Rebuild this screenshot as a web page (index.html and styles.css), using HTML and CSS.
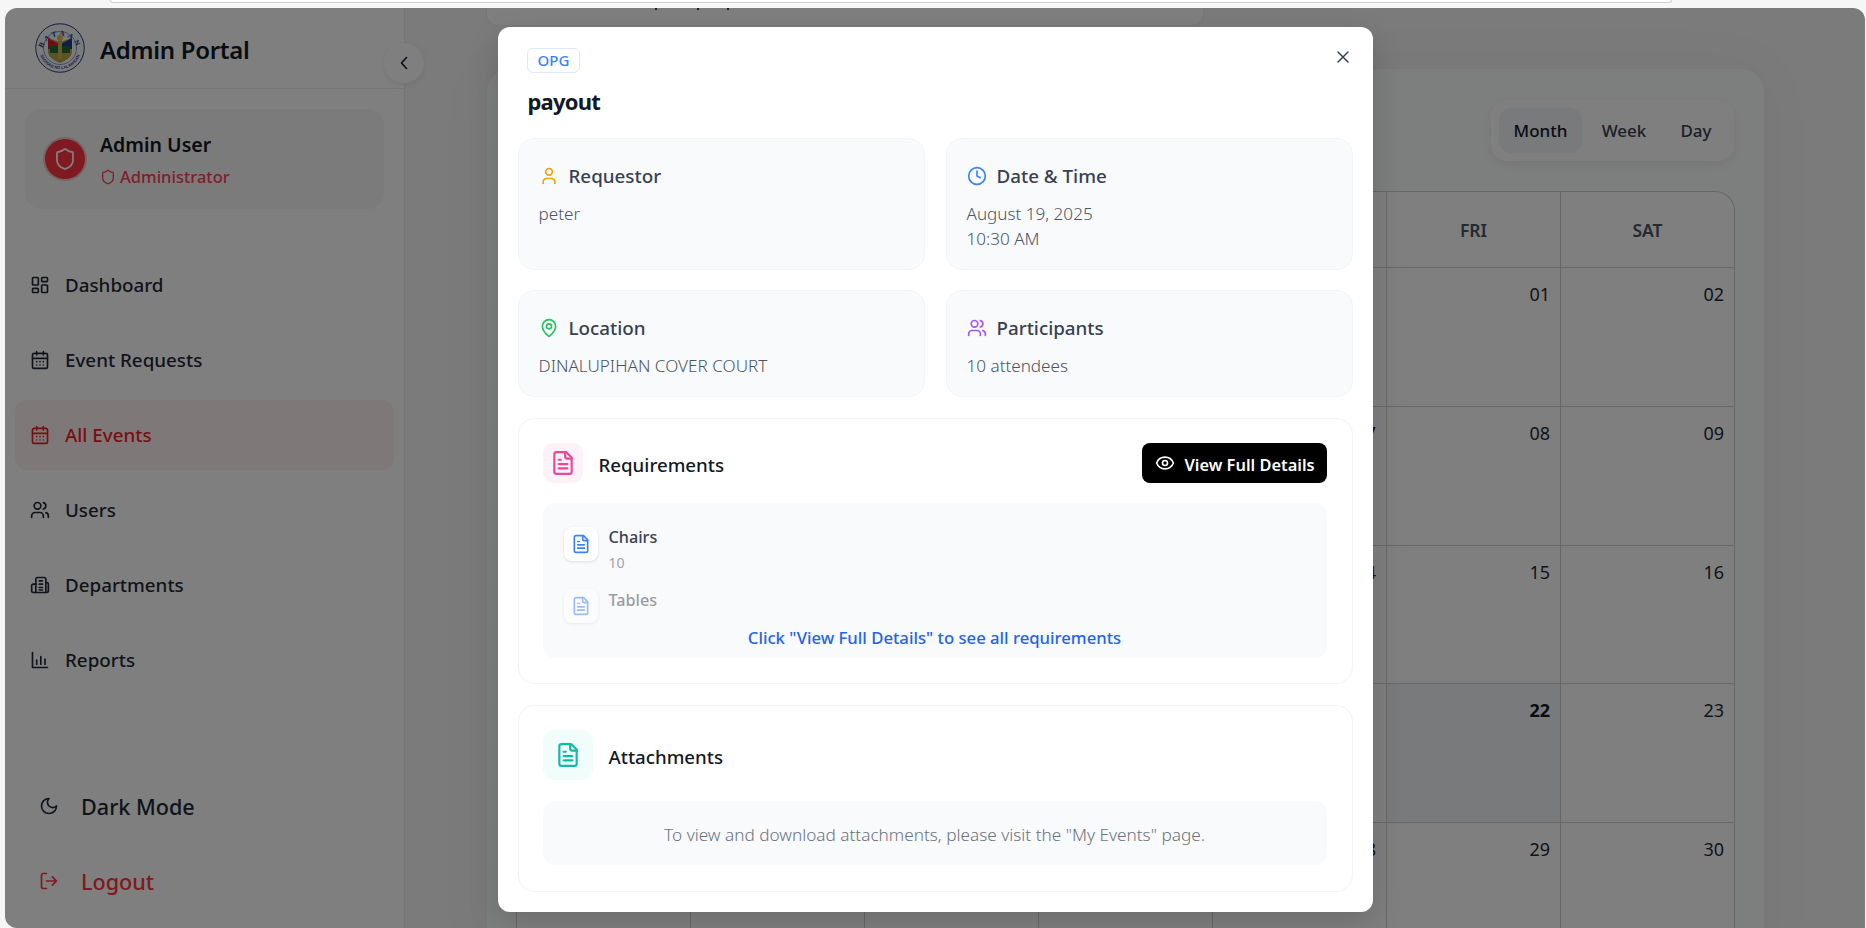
FILE: index.html
```html
<!DOCTYPE html>
<html lang="en">
<head>
<meta charset="utf-8">
<title>Admin Portal</title>
<link rel="stylesheet" href="styles.css">
</head>
<body>
<svg class="defs" width="0" height="0" aria-hidden="true">
  <symbol id="i-shield" viewBox="0 0 24 24"><path d="M20 13c0 5-3.5 7.5-7.66 8.95a1 1 0 0 1-.67-.01C7.5 20.5 4 18 4 13V6a1 1 0 0 1 1-1c2 0 4.5-1.2 6.24-2.72a1.17 1.17 0 0 1 1.52 0C14.51 3.81 17 5 19 5a1 1 0 0 1 1 1z"/></symbol>
  <symbol id="i-dash" viewBox="0 0 24 24"><rect x="3" y="3" width="7" height="9" rx="1"/><rect x="14" y="3" width="7" height="5" rx="1"/><rect x="14" y="12" width="7" height="9" rx="1"/><rect x="3" y="16" width="7" height="5" rx="1"/></symbol>
  <symbol id="i-cal" viewBox="0 0 24 24"><path d="M8 2v4M16 2v4"/><rect x="3" y="4" width="18" height="18" rx="2"/><path d="M3 10h18M8 14h.01M12 14h.01M16 14h.01M8 18h.01M12 18h.01M16 18h.01"/></symbol>
  <symbol id="i-users" viewBox="0 0 24 24"><path d="M16 21v-2a4 4 0 0 0-4-4H6a4 4 0 0 0-4 4v2"/><circle cx="9" cy="7" r="4"/><path d="M22 21v-2a4 4 0 0 0-3-3.87M16 3.13a4 4 0 0 1 0 7.75"/></symbol>
  <symbol id="i-building" viewBox="0 0 24 24"><path d="M7 21V5a2 2 0 0 1 2-2h8a2 2 0 0 1 2 2v16"/><path d="M7 11H4a2 2 0 0 0-2 2v6a2 2 0 0 0 2 2h16a2 2 0 0 0 2-2v-8a2 2 0 0 0-2-2h-1"/><path d="M11 7h4M11 11h4M11 15h4M11 18h4"/></symbol>
  <symbol id="i-chart" viewBox="0 0 24 24"><path d="M3 3v18h18M8 17v-5M13 17V8M18 17v-6"/></symbol>
  <symbol id="i-moon" viewBox="0 0 24 24"><path d="M12 3a6 6 0 0 0 9 9 9 9 0 1 1-9-9Z"/></symbol>
  <symbol id="i-logout" viewBox="0 0 24 24"><path d="M9 21H5a2 2 0 0 1-2-2V5a2 2 0 0 1 2-2h4M16 17l5-5-5-5M21 12H9"/></symbol>
  <symbol id="i-user" viewBox="0 0 24 24"><path d="M19 21v-2a4 4 0 0 0-4-4H9a4 4 0 0 0-4 4v2"/><circle cx="12" cy="7" r="4"/></symbol>
  <symbol id="i-clock" viewBox="0 0 24 24"><circle cx="12" cy="12" r="10"/><path d="M12 6v6l4 2"/></symbol>
  <symbol id="i-pin" viewBox="0 0 24 24"><path d="M20 10c0 5-5.5 10.2-7.4 11.8a1 1 0 0 1-1.2 0C9.5 20.2 4 15 4 10a8 8 0 0 1 16 0"/><circle cx="12" cy="10" r="3"/></symbol>
  <symbol id="i-file" viewBox="0 0 24 24"><path d="M15 2H6a2 2 0 0 0-2 2v16a2 2 0 0 0 2 2h12a2 2 0 0 0 2-2V7Z"/><path d="M14 2v4a2 2 0 0 0 2 2h4M10 9H8M16 13H8M16 17H8"/></symbol>
  <symbol id="i-eye" viewBox="0 0 24 24"><path d="M2.06 12.35a1 1 0 0 1 0-.7 10.75 10.75 0 0 1 19.88 0 1 1 0 0 1 0 .7 10.75 10.75 0 0 1-19.88 0"/><circle cx="12" cy="12" r="3"/></symbol>
</svg>

<div class="browser-strip"><div class="address-pill"></div></div>

<div class="app">
  <aside class="sidebar">
    <header class="brand">
      <svg class="logo" viewBox="0 0 100 100" role="img" aria-label="Bataan seal">
        <defs>
          <path id="arc-top" d="M15 55a35.5 35.5 0 0 1 70 0"/>
          <path id="arc-bottom" d="M8 50a42 42 0 0 0 84 0"/>
        </defs>
        <circle cx="50" cy="50" r="48.5" fill="#f4f6fb" stroke="#2b3a86" stroke-width="2"/>
        <circle cx="50" cy="50" r="33" fill="#f4f6fb" stroke="#2b3a86" stroke-width="1"/>
        <text class="logo-top"><textPath href="#arc-top" startOffset="50%" text-anchor="middle">BATAAN</textPath></text>
        <text class="logo-bottom"><textPath href="#arc-bottom" startOffset="50%" text-anchor="middle">SAGISAG NG LALAWIGAN</textPath></text>
        <path d="M26 30l24 8 24-8v28c0 10-12 17-24 22-12-5-24-12-24-22z" fill="#b8a648"/>
        <path d="M26 30l20 11v11H26z" fill="#d8202c"/>
        <path d="M74 30L54 41v11h20z" fill="#1e3a8f"/>
        <path d="M30 46h40v14H30z" fill="#1f6a3a"/>
        <path d="M46 28h8v44h-8z" fill="#c9b755"/>
        <circle cx="50" cy="30" r="6" fill="#d6c463"/>
      </svg>
      <span class="brand-name">Admin Portal</span>
    </header>
    <button class="collapse" aria-label="Collapse sidebar"><svg class="ico ico-18" viewBox="0 0 18 18"><path d="M11.5 3.5 6.5 9l5 5.5"/></svg></button>

    <section class="user-card">
      <span class="avatar"><svg class="ico ico-24"><use href="#i-shield"/></svg></span>
      <div>
        <div class="user-name">Admin User</div>
        <div class="user-role"><svg class="ico ico-16"><use href="#i-shield"/></svg>Administrator</div>
      </div>
    </section>

    <nav class="nav">
      <a class="nav-item"><svg class="ico ico-20"><use href="#i-dash"/></svg>Dashboard</a>
      <a class="nav-item"><svg class="ico ico-20"><use href="#i-cal"/></svg>Event Requests</a>
      <a class="nav-item is-active"><svg class="ico ico-20"><use href="#i-cal"/></svg>All Events</a>
      <a class="nav-item"><svg class="ico ico-20"><use href="#i-users"/></svg>Users</a>
      <a class="nav-item"><svg class="ico ico-20"><use href="#i-building"/></svg>Departments</a>
      <a class="nav-item"><svg class="ico ico-20"><use href="#i-chart"/></svg>Reports</a>
    </nav>

    <div class="side-foot">
      <a class="foot-item"><svg class="ico ico-20"><use href="#i-moon"/></svg>Dark Mode</a>
      <a class="foot-item is-danger"><svg class="ico ico-20"><use href="#i-logout"/></svg>Logout</a>
    </div>
  </aside>

  <main class="main">
    <div class="intro-card"><i class="tick tick-a"></i><i class="tick tick-b"></i><i class="tick tick-c"></i></div>
    <section class="calendar-card">
      <div class="view-row">
        <div class="view-toggle">
          <button class="view-btn view-month is-on">Month</button>
          <button class="view-btn view-week">Week</button>
          <button class="view-btn view-day">Day</button>
        </div>
      </div>
      <div class="cal-grid">
        <div class="cal-head"></div><div class="cal-head"></div><div class="cal-head"></div><div class="cal-head"></div><div class="cal-head"></div><div class="cal-head">FRI</div><div class="cal-head">SAT</div>
        <div class="cal-day"></div><div class="cal-day"></div><div class="cal-day"></div><div class="cal-day"></div><div class="cal-day">31</div><div class="cal-day">01</div><div class="cal-day">02</div>
        <div class="cal-day"></div><div class="cal-day"></div><div class="cal-day"></div><div class="cal-day"></div><div class="cal-day">07</div><div class="cal-day">08</div><div class="cal-day">09</div>
        <div class="cal-day"></div><div class="cal-day"></div><div class="cal-day"></div><div class="cal-day"></div><div class="cal-day">14</div><div class="cal-day">15</div><div class="cal-day">16</div>
        <div class="cal-day"></div><div class="cal-day"></div><div class="cal-day"></div><div class="cal-day"></div><div class="cal-day">21</div><div class="cal-day is-today">22</div><div class="cal-day">23</div>
        <div class="cal-day"></div><div class="cal-day"></div><div class="cal-day"></div><div class="cal-day"></div><div class="cal-day">28</div><div class="cal-day">29</div><div class="cal-day">30</div>
      </div>
    </section>
  </main>

  <div class="overlay">
    <article class="modal">
      <button class="close" aria-label="Close"><svg class="ico ico-18" viewBox="0 0 18 18"><path d="M14 4 4 14M4 4l10 10"/></svg></button>
      <header class="modal-head">
        <span class="badge">OPG</span>
        <h2 class="modal-title">payout</h2>
      </header>

      <div class="info-grid">
        <div class="info-card">
          <div class="info-label"><svg class="ico ico-20 c-amber"><use href="#i-user"/></svg>Requestor</div>
          <div class="info-value">peter</div>
        </div>
        <div class="info-card">
          <div class="info-label"><svg class="ico ico-20 c-blue"><use href="#i-clock"/></svg>Date &amp; Time</div>
          <div class="info-value">August 19, 2025<br>10:30 AM</div>
        </div>
        <div class="info-card">
          <div class="info-label"><svg class="ico ico-20 c-green"><use href="#i-pin"/></svg>Location</div>
          <div class="info-value">DINALUPIHAN COVER COURT</div>
        </div>
        <div class="info-card">
          <div class="info-label"><svg class="ico ico-20 c-purple"><use href="#i-users"/></svg>Participants</div>
          <div class="info-value">10 attendees</div>
        </div>
      </div>

      <section class="panel">
        <div class="panel-head">
          <span class="panel-icon is-pink"><svg class="ico ico-26"><use href="#i-file"/></svg></span>
          <h3 class="panel-title">Requirements</h3>
          <button class="details-btn"><svg class="ico ico-20"><use href="#i-eye"/></svg><span class="details-text">View Full Details</span></button>
        </div>
        <div class="req-box">
          <div class="req-row">
            <span class="req-icon"><svg class="ico ico-20"><use href="#i-file"/></svg></span>
            <div><div class="req-name">Chairs</div><div class="req-qty">10</div></div>
          </div>
          <div class="req-row is-faded">
            <span class="req-icon"><svg class="ico ico-20"><use href="#i-file"/></svg></span>
            <div><div class="req-name">Tables</div></div>
          </div>
          <p class="req-note">Click "View Full Details" to see all requirements</p>
        </div>
      </section>

      <section class="panel panel-attach">
        <div class="panel-head panel-head-wide">
          <span class="panel-icon is-teal"><svg class="ico ico-26"><use href="#i-file"/></svg></span>
          <h3 class="panel-title">Attachments</h3>
        </div>
        <div class="attach-box">To view and download attachments, please visit the "My Events" page.</div>
      </section>
    </article>
  </div>
</div>
</body>
</html>
```

FILE: styles.css
```css
* { box-sizing: border-box; }
html, body { height: 100%; }
body {
  margin: 0;
  height: 928px;
  overflow: hidden;
  display: flex;
  flex-direction: column;
  background: #f6f6f6;
  font-family: "Noto Sans", "Open Sans", sans-serif;
  color: #111827;
}
.defs { position: absolute; }
h2, h3, p { margin: 0; }
button { font: inherit; border: 0; background: none; color: inherit; padding: 0; }

.ico { fill: none; stroke: currentColor; stroke-width: 2; stroke-linecap: round; stroke-linejoin: round; flex: none; display: block; }
.ico-16 { width: 16px; height: 16px; }
.ico-18 { width: 18px; height: 18px; }
.ico-20 { width: 20px; height: 20px; }
.ico-24 { width: 24px; height: 24px; }
.ico-26 { width: 26px; height: 26px; }

.browser-strip { height: 8px; flex: none; padding: 0 194px 0 110px; background: #f6f6f6; }
.address-pill { height: 3px; background: #fff; border: 1px solid #cfcfcf; border-top: 0; border-radius: 0 0 10px 10px; }

.app {
  position: relative;
  flex: 1;
  min-height: 0;
  margin-left: 5px;
  margin-right: 1px;
  display: flex;
  border-radius: 12px 12px 0 12px;
  overflow: hidden;
  background: #f6f6f6;
}

/* sidebar */
.sidebar {
  position: relative;
  width: 400px;
  flex: none;
  display: flex;
  flex-direction: column;
  background: #fff;
  border-right: 1px solid #ebebeb;
}
.brand { height: 81px; flex: none; display: flex; align-items: center; gap: 15px; padding-left: 30px; border-bottom: 1px solid #f0f0f0; }
.logo { width: 50px; height: 50px; flex: none; }
.logo-top { font: 700 15px "Liberation Serif", serif; fill: #2b3a86; letter-spacing: 5px; }
.logo-bottom { font: 700 8px "Liberation Sans", sans-serif; fill: #2b3a86; }
.brand-name { padding-top: 2px; font-size: 24px; font-weight: 600; letter-spacing: -.3px; color: #111827; }
.collapse {
  position: absolute;
  left: 379px;
  top: 35px;
  width: 40px;
  height: 40px;
  border-radius: 50%;
  background: #fff;
  box-shadow: 0 2px 6px rgba(0,0,0,.08);
  display: flex;
  align-items: center;
  justify-content: center;
  z-index: 2;
}
.collapse .ico { stroke-width: 1.6; }
.user-card {
  margin: 20px 20px 0;
  height: 100px;
  flex: none;
  display: flex;
  align-items: center;
  gap: 15px;
  padding-left: 20px;
  background: #f6f6f6;
  border-radius: 16px;
}
.avatar {
  width: 40px;
  height: 40px;
  border-radius: 50%;
  background: #ff3442;
  box-shadow: 0 0 0 2px #e8c8c8;
  color: #fff;
  display: flex;
  align-items: center;
  justify-content: center;
}
.avatar .ico { stroke-width: 1.8; }
.user-name { font-size: 19.5px; font-weight: 600; line-height: 28px; margin-top: 5px; color: #111827; }
.user-role { display: flex; align-items: center; gap: 4px; margin-top: 2px; font-size: 16.5px; font-weight: 500; line-height: 32px; color: #ff4050; }

.nav { margin: 41px 10px 0; display: flex; flex-direction: column; gap: 5px; }
.nav-item { height: 70px; display: flex; align-items: center; gap: 15px; padding-left: 15px; border-radius: 12px; font-size: 18.8px; font-weight: 500; color: #1f2937; }
.nav-item.is-active { background: #fdf1f1; color: #f41a24; }
.side-foot { margin-top: auto; padding: 0 0 12px 34px; display: flex; flex-direction: column; gap: 5px; }
.foot-item { height: 70px; display: flex; align-items: center; gap: 22px; font-size: 21.6px; font-weight: 500; color: #1f2937; }
.foot-item.is-danger { color: #fe343c; }

/* main */
.main { flex: 1; min-width: 0; display: flex; flex-direction: column; padding: 0 100px 0 81px; }
.intro-card {
  height: 18px;
  flex: none;
  width: 718px;
  display: flex;
  align-items: flex-start;
  background: #fff;
  border: 1px solid #eee;
  border-top: 0;
  border-radius: 0 0 12px 12px;
}
.tick { width: 2px; height: 2px; background: #374151; }
.tick-a { margin-left: 168px; }
.tick-b { margin-left: 40px; }
.tick-c { margin-left: 28px; }
.calendar-card {
  flex: none;
  margin-top: 42px;
  padding: 31px 29px 0;
  background-color: #fbfdfc;
  background-image: radial-gradient(circle, #f2f4f3 1px, transparent 1.5px);
  background-size: 40px 40px;
  background-position: -18px -17px;
  border: 1px solid #f1f1f1;
  border-radius: 24px 24px 0 0;
  box-shadow: 0 0 60px rgba(0,0,0,.04);
}
.view-row { display: flex; justify-content: flex-end; padding-right: 1px; margin-bottom: 30px; }
.view-toggle { display: flex; gap: 5px; padding: 8px; background: #fff; border-radius: 16px; box-shadow: 0 4px 12px rgba(0,0,0,.07); }
.view-btn { height: 45px; font-size: 17px; font-weight: 500; text-align: center; color: #374151; border-radius: 12px; }
.view-month { width: 83px; }
.view-week { width: 74px; }
.view-day { width: 60px; }
.view-btn.is-on { background: #f3f4f6; color: #111827; }
.cal-grid {
  width: 1219px;
  display: grid;
  grid-template-columns: repeat(6, 174px) 173px;
  grid-template-rows: 76px 139px 139px 138px 139px 139px;
  border: 1px solid #cfcfcf;
  border-bottom: 0;
  border-radius: 20px 20px 0 0;
  background: #fff;
  overflow: hidden;
}
.cal-head { display: flex; align-items: center; justify-content: center; font-size: 17.5px; font-weight: 600; color: #4b5563; border-right: 1px solid #d1d1d1; border-bottom: 1px solid #cfcfcf; }
.cal-day { padding: 12px 10px 0 0; text-align: right; font-size: 18px; line-height: 28px; color: #1f2937; border-right: 1px solid #cfcfcf; border-bottom: 1px solid #cfcfcf; }
.cal-head:nth-child(7), .cal-day:nth-child(7n) { border-right: 0; }
.cal-day.is-today { background: #f2f4f8; font-weight: 700; color: #111827; }

/* modal */
.overlay { position: absolute; inset: 0; background: rgba(0,0,0,.5); display: flex; justify-content: center; align-items: flex-start; padding-top: 19px; z-index: 5; }
.modal { position: relative; width: 875px; height: 885px; padding: 21px 20px 0; background: #fff; border-radius: 12px; box-shadow: 0 10px 30px rgba(0,0,0,.15); }
.close { position: absolute; top: 21px; right: 21px; color: #374151; }
.close .ico { stroke-width: 1.5; }
.modal-head { padding-left: 9px; height: 90px; }
.badge { display: inline-block; height: 25px; padding: 0 10px; font-size: 15px; font-weight: 500; line-height: 23px; color: #3b82f6; background: #fff; border: 1px solid #dbeafe; border-radius: 6px; }
.modal-title { margin: 13px 0 0 1px; font-size: 22px; line-height: 30px; font-weight: 700; letter-spacing: -.8px; color: #111827; }

.info-grid { display: grid; grid-template-columns: 1fr 1fr; grid-template-rows: 132px 107px; gap: 20px 21px; }
.info-card { padding: 23px 20px 0; background: #f9fafb; border: 1px solid #f3f4f6; border-radius: 16px; }
.info-label { display: flex; align-items: center; gap: 10px; height: 27px; font-size: 18.8px; font-weight: 500; color: #374151; margin-bottom: 12px; }
.info-value { font-size: 17.1px; line-height: 25px; font-weight: 300; color: #4b5563; }

.panel { margin-top: 21px; padding: 24px 25px 25px 24px; background: #fff; border: 1px solid #f3f4f6; border-radius: 16px; }
.panel-attach { padding-bottom: 26px; }
.panel-head { display: flex; align-items: center; gap: 16px; height: 40px; margin-bottom: 20px; }
.panel-head-wide { height: 50px; margin-bottom: 21px; }
.panel-title { flex: 1; padding-top: 3px; font-size: 18.7px; font-weight: 500; color: #111827; }
.panel-icon { width: 40px; height: 40px; border-radius: 10px; display: flex; align-items: center; justify-content: center; }
.panel-icon.is-pink { background: #fdf2f8; color: #ec4899; }
.panel-icon.is-teal { width: 50px; height: 50px; border-radius: 12px; background: #f0fdfa; color: #14b8a6; }
.details-btn { width: 185px; height: 40px; display: flex; align-items: center; gap: 10px; padding-left: 13px; background: #000; color: #fff; border-radius: 8px; font-size: 16.4px; font-weight: 600; }
.details-text { padding-top: 2px; }
.c-amber { color: #f59e0b; }
.c-blue { color: #3b82f6; }
.c-green { color: #22c55e; }
.c-purple { color: #a855f7; }

.req-box { height: 155px; padding: 24px 21px 0; background: #f9fafb; border-radius: 12px; }
.req-row { display: flex; gap: 11px; height: 62px; }
.req-row.is-faded { height: 37px; opacity: .5; }
.req-row.is-faded .req-name { padding-top: 1px; }
.req-icon { width: 34px; height: 34px; display: flex; align-items: center; justify-content: center; background: #fff; border-radius: 8px; box-shadow: 0 1px 3px rgba(0,0,0,.12); color: #3b82f6; }
.req-name { font-size: 16.2px; font-weight: 500; line-height: 21px; color: #374151; }
.req-qty { font-size: 14px; line-height: 30px; color: #9ca3af; }
.req-note { text-align: center; font-size: 16.7px; font-weight: 500; line-height: 24px; color: #2563eb; }
.attach-box { height: 64px; padding-top: 2px; display: flex; align-items: center; justify-content: center; background: #f9fafb; border-radius: 12px; font-size: 17.2px; font-weight: 300; color: #6b7280; }
```
